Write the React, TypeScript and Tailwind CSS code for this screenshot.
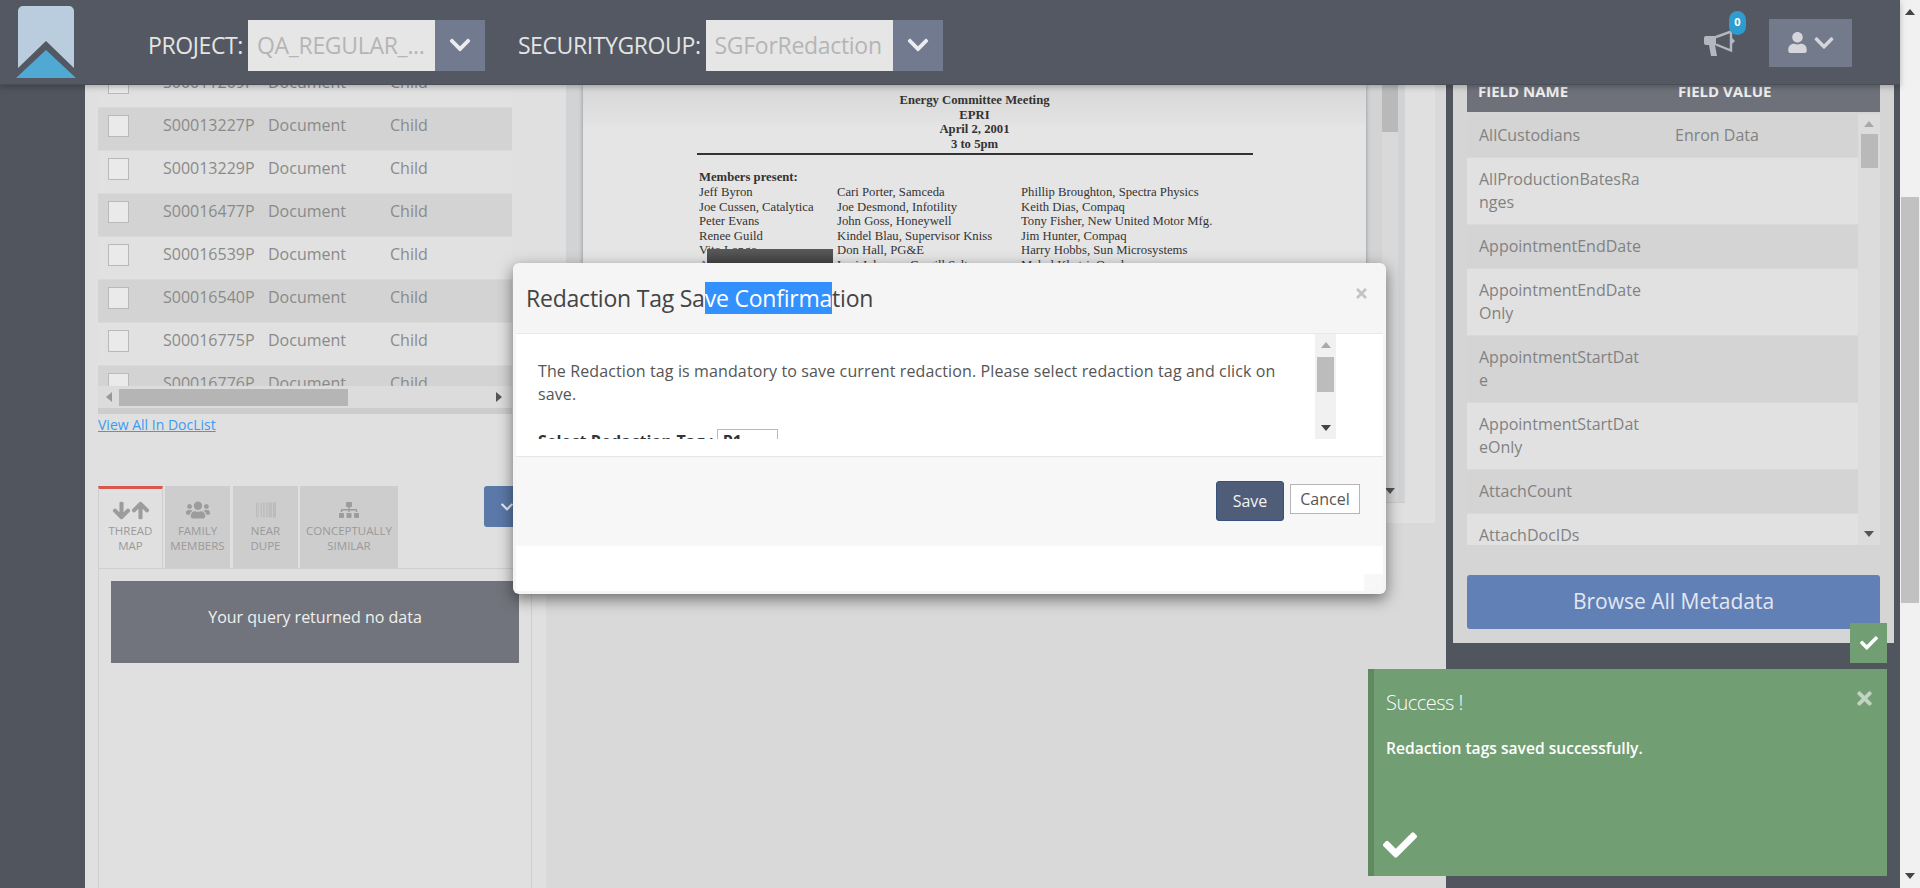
import React from 'react';
import { FaUser, FaChevronDown, FaCheck, FaTimes, FaUsers, FaBarcode, FaSitemap, FaArrowDown, FaArrowUp } from 'react-icons/fa';

const DOC_ROWS = ['S00011209P', 'S00013227P', 'S00013229P', 'S00016477P', 'S00016539P', 'S00016540P', 'S00016775P', 'S00016776P'];

const FIELDS = [
  { name: 'AllCustodians', value: 'Enron Data' },
  { name: 'AllProductionBatesRanges', value: '' },
  { name: 'AppointmentEndDate', value: '' },
  { name: 'AppointmentEndDateOnly', value: '' },
  { name: 'AppointmentStartDate', value: '' },
  { name: 'AppointmentStartDateOnly', value: '' },
  { name: 'AttachCount', value: '' },
  { name: 'AttachDocIDs', value: '' },
];

const MEMBERS = [
  ['Jeff Byron', 'Cari Porter, Samceda', 'Phillip Broughton, Spectra Physics'],
  ['Joe Cussen, Catalytica', 'Joe Desmond, Infotility', 'Keith Dias, Compaq'],
  ['Peter Evans', 'John Goss, Honeywell', 'Tony Fisher, New United Motor Mfg.'],
  ['Renee Guild', 'Kindel Blau, Supervisor Kniss', 'Jim Hunter, Compaq'],
  ['Vito Longo', 'Don Hall, PG&E', 'Harry Hobbs, Sun Microsystems'],
  ['Arthur', 'Lori Johnson, Cargill Salt', 'Mehul Khatri, Oracle'],
];

function Arrow({ dir, className }: { dir: 'up' | 'down' | 'left' | 'right'; className: string }) {
  const points = { up: '0,8 5,2 10,8', down: '0,2 5,8 10,2', left: '8,0 2,5 8,10', right: '2,0 8,5 2,10' }[dir];
  return (
    <svg viewBox="0 0 10 10" className={className} fill="currentColor">
      <polygon points={points} />
    </svg>
  );
}

function Logo() {
  return (
    <svg viewBox="0 0 60 72" className="w-[60px] h-[72px]">
      <path d="M2 5 a5 5 0 0 1 5 -5 h46 a5 5 0 0 1 5 5 v57 L30 35 L2 62 z" fill="#b9cddf" />
      <path d="M0 72 L30 44 L60 72 Z" fill="#4fa9d3" />
    </svg>
  );
}

function Bullhorn() {
  return (
    <svg viewBox="0 0 32 26" className="w-[32px] h-[26px]">
      <path d="M1 6 h12 v9 h-1 l2 11 h-6 l-2 -11 h-3 a2 2 0 0 1 -2 -2 v-5 a2 2 0 0 1 2 -2 z" fill="#b4b7c0" />
      <path d="M13 7 L28 1.5 V20.5 L13 14.5" fill="none" stroke="#b4b7c0" strokeWidth="2.4" />
      <path d="M29 8 L32 11 L29 14 Z" fill="#b4b7c0" />
    </svg>
  );
}

function Picker({ label, value }: { label: string; value: string }) {
  return (
    <div className="flex items-center">
      <span className="text-[23px] text-[#e4e4e4] tracking-[-0.4px] mr-[5px]">{label}</span>
      <span className="w-[187px] h-[51px] bg-[#e6e6e6] text-[#b5b5b5] text-[23px] tracking-[-0.3px] leading-[51px] pl-[9px] whitespace-nowrap overflow-hidden">{value}</span>
      <span className="w-[50px] h-[51px] bg-[#717a8e] flex items-center justify-center text-[#ececf0]">
        <FaChevronDown size={24} />
      </span>
    </div>
  );
}

function Tab({ icon, lines, active, width }: { icon: React.ReactNode; lines: string[]; active?: boolean; width: string }) {
  return (
    <div className={`${width} h-[82px] flex flex-col items-center text-[11.5px] leading-[15px] text-[#9a9a9a] ${active ? 'border-t-[3px] border-t-[#d9574f] border-x border-x-[#cfcfcf] bg-[#e0e0e0] pt-[9px]' : 'bg-[#cdcdcd] pt-[12px]'}`}>
      <div className="h-[24px] flex items-center text-[#9c9c9c]">{icon}</div>
      <div className="mt-[1px] text-center">
        {lines.map((l) => (
          <div key={l}>{l}</div>
        ))}
      </div>
    </div>
  );
}

function LeftColumn() {
  return (
    <div className="w-[447px] shrink-0 pl-[13px] bg-[#e0e0e0] flex flex-col text-[#8a8a8a]">
      <div className="w-[414px] h-[301px] overflow-hidden shrink-0">
        <div className="-mt-[20px]">
          {DOC_ROWS.map((id, i) => (
            <div key={id} className={`h-[43px] flex items-start border-b border-[#d9d9d9] text-[16px] leading-[22px] ${i % 2 === 0 ? 'bg-[#e1e1e1]' : 'bg-[#d3d3d3]'}`}>
              <span className="w-[21px] h-[22px] ml-[10px] mt-[7px] border border-[#b9b9b9] bg-[#eaeaea] shrink-0"></span>
              <span className="w-[105px] ml-[34px] pt-[6px] shrink-0">{id}</span>
              <span className="w-[122px] pt-[6px] shrink-0">Document</span>
              <span className="pt-[6px]">Child</span>
            </div>
          ))}
        </div>
      </div>
      <div className="w-[414px] h-[22px] bg-[#dcdcdc] flex items-center text-[#777] shrink-0">
        <Arrow dir="left" className="w-[10px] h-[10px] ml-[6px] text-[#999]" />
        <div className="w-[229px] h-[17px] bg-[#b5b5b5] ml-[5px]"></div>
        <Arrow dir="right" className="w-[10px] h-[10px] ml-auto mr-[8px] text-[#555]" />
      </div>
      <div className="w-[414px] h-[6px] bg-[#cdcdcd] shrink-0"></div>
      <a className="text-[14px] leading-[20px] text-[#3c9bf0] underline mt-[1px] self-start">View All In DocList</a>
      <div className="flex items-start mt-[51px] gap-[2px] border-b border-[#cfcfcf] h-[83px] shrink-0">
        <Tab
          active
          width="w-[65px]"
          lines={['THREAD', 'MAP']}
          icon={
            <span className="flex">
              <FaArrowDown size={19} stroke="currentColor" strokeWidth={30} />
              <FaArrowUp size={19} stroke="currentColor" strokeWidth={30} />
            </span>
          }
        />
        <Tab width="w-[65px]" lines={['FAMILY', 'MEMBERS']} icon={<FaUsers size={24} />} />
        <div className="ml-[1px]"><Tab width="w-[65px]" lines={['NEAR', 'DUPE']} icon={<FaBarcode size={20} className="text-[#b5b5b5]" />} /></div>
        <Tab width="w-[98px]" lines={['CONCEPTUALLY', 'SIMILAR']} icon={<FaSitemap size={20} />} />
        <div className="ml-auto w-[48px] h-[41px] rounded-l-[3px] bg-[#5b79a8] flex items-center text-[#e7ecf3] pl-[16px]">
          <FaChevronDown size={14} />
        </div>
      </div>
      <div className="flex-1 border-x border-[#cfcfcf] px-[12px] pt-[12px]">
        <div className="h-[82px] w-[408px] bg-[#71747c] text-[#f0f0f0] text-[16px] flex items-center justify-center pb-[10px]">
          Your query returned no data
        </div>
      </div>
    </div>
  );
}

function DocViewer() {
  return (
    <div className="flex-1 bg-[#d9d9d9] flex flex-col border-l-[14px] border-[#e0e0e0]">
      <div className="w-[889px] h-[438px] bg-[#e0e0e0] pl-[20px] shrink-0">
        <div className="w-[839px] h-[418px] bg-[#d2d3d5] border-b border-[#cccccc] pl-[17px] flex overflow-hidden">
          <div className="w-[783px] h-full bg-[#e5e5e5] shadow-[0_0_4px_rgba(0,0,0,0.35)] overflow-hidden font-['Liberation_Serif',serif] text-[#333] relative">
            <div className="h-[40px] bg-gradient-to-b from-[#d6d6d6] to-[#e3e3e3] absolute inset-x-0 top-0"></div>
            <div className="relative pt-[8px] text-[12.7px] font-bold leading-[14.6px] text-center">
              <div>Energy Committee Meeting</div>
              <div>EPRI</div>
              <div>April 2, 2001</div>
              <div>3 to 5pm</div>
            </div>
            <div className="relative h-[2px] w-[556px] ml-[114px] mt-[2px] bg-[#333]"></div>
            <div className="relative ml-[116px] mt-[15px] text-[12.7px] leading-[14.6px]">
              <div className="font-bold">Members present:</div>
              {MEMBERS.map((row) => (
                <div key={row[0]} className="flex whitespace-nowrap">
                  <span className="w-[138px]">{row[0]}</span>
                  <span className="w-[184px]">{row[1]}</span>
                  <span>{row[2]}</span>
                </div>
              ))}
              <div className="absolute left-[8px] top-[79px] w-[126px] h-[30px] bg-gradient-to-b from-[#5a5a5a] to-[#2b2b2b]"></div>
            </div>
          </div>
          <div className="w-[16px] ml-[16px] h-full bg-[#d9d9d9] flex flex-col items-center">
            <div className="w-full h-[47px] bg-[#b9b9b9]"></div>
            <Arrow dir="down" className="w-[10px] h-[10px] mt-auto mb-[6px] text-[#555]" />
          </div>
        </div>
      </div>
    </div>
  );
}

function MetadataColumn() {
  return (
    <div className="w-[454px] shrink-0 bg-[#50555e] pl-[7px] pr-[6px]">
      <div className="h-[558px] bg-[#d5d5d5] px-[14px] flex flex-col">
        <div className="h-[27px] bg-[#6e717a] flex items-start text-[15px] leading-[12px] font-bold text-[#eeeeee] shrink-0">
          <span className="w-[211px] pl-[11px]">FIELD NAME</span>
          <span>FIELD VALUE</span>
        </div>
        <div className="h-[431px] mt-[2px] flex overflow-hidden shrink-0">
          <div className="w-[391px] text-[16px] leading-[23px] text-[#828282]">
            {FIELDS.map((f, i) => (
              <div key={f.name} className={`flex border-b border-[#d9d9d9] py-[10px] ${i % 2 === 0 ? 'bg-[#d4d4d4]' : 'bg-[#e1e1e1]'}`}>
                <span className="w-[168px] ml-[12px] break-all">{f.name}</span>
                <span className="ml-[28px]">{f.value}</span>
              </div>
            ))}
          </div>
          <div className="w-[22px] bg-[#dcdcdc] flex flex-col items-center">
            <Arrow dir="up" className="w-[10px] h-[10px] mt-[5px] text-[#a9a9a9]" />
            <div className="w-[17px] h-[34px] bg-[#b9b9b9] mt-[5px]"></div>
            <Arrow dir="down" className="w-[10px] h-[10px] mt-auto mb-[6px] text-[#555]" />
          </div>
        </div>
        <div className="mt-[30px] h-[54px] rounded-[3px] bg-[#6180b6] text-[#e3e7f1] text-[21px] flex items-center justify-center shrink-0">
          Browse All Metadata
        </div>
      </div>
    </div>
  );
}

function RedactionModal() {
  return (
    <div className="absolute left-[513px] top-[263px] w-[873px] h-[331px] rounded-[6px] bg-[#f5f5f5] p-[3px] shadow-[0_5px_15px_rgba(0,0,0,0.5)] flex flex-col">
      <div className="h-[68px] border-b border-[#e9e9e9] pl-[10px] flex items-start justify-between shrink-0">
        <h4 className="text-[23px] leading-[32px] mt-[16px] text-[#444] tracking-[-0.22px]">
          Redaction Tag Sa<span className="bg-[#3390ff] text-white">ve Confirma</span>tion
        </h4>
        <FaTimes size={15} className="text-[#c4c4c4] mt-[20px] mr-[14px]" />
      </div>
      <div className="h-[122px] bg-white flex shrink-0">
        <div className="w-[799px] h-[105px] overflow-hidden px-[22px] pt-[26px] text-[16px] leading-[23px] text-[#555] tracking-[0.12px]">
          <p>The Redaction tag is mandatory to save current redaction. Please select redaction tag and click on save.</p>
          <div className="mt-[23px] flex items-start">
            <b className="text-[#333] pt-[1px]">Select Redaction Tag :</b>
            <span className="ml-[3px] w-[61px] h-[24px] border border-[#bbb] pl-[5px] font-bold text-[#333] leading-[22px] flex justify-between pr-[4px]">P1<Arrow dir="down" className="w-[10px] h-[10px] mt-[8px] text-[#555]" /></span>
          </div>
        </div>
        <div className="w-[21px] h-[105px] bg-[#f1f1f1] flex flex-col items-center">
          <Arrow dir="up" className="w-[10px] h-[10px] mt-[6px] text-[#aaa]" />
          <div className="w-[17px] h-[35px] bg-[#bcbcbc] mt-[7px]"></div>
          <Arrow dir="down" className="w-[10px] h-[10px] mt-auto mb-[6px] text-[#444]" />
        </div>
      </div>
      <div className="h-[90px] bg-[#f7f7f7] border-t border-[#e6e6e6] flex justify-end items-start pt-[24px] pr-[23px] shrink-0">
        <button className="w-[68px] h-[40px] bg-[#4f5d78] border border-[#35527f] rounded-[3px] text-[#f2f2f2] text-[16px]">Save</button>
        <button className="w-[70px] h-[30px] ml-[6px] mt-[3px] bg-white border border-[#b5b5b5] text-[#555] text-[16px]">Cancel</button>
      </div>
      <div className="flex-1 bg-white flex justify-end items-end">
        <div className="w-[19px] h-[17px] bg-[#f7f7f7]"></div>
      </div>
    </div>
  );
}

function SuccessToast() {
  return (
    <>
      <div className="absolute left-[1850px] top-[623px] w-[37px] h-[40px] bg-[#729e74] flex items-center justify-center text-white">
        <FaCheck size={18} />
      </div>
      <div className="absolute left-[1368px] top-[669px] w-[519px] h-[207px] bg-[#729e74] border-l-[6px] border-[#5f8a60] text-white">
        <div className="text-[20px] font-light leading-[28px] mt-[20px] ml-[12px] tracking-[-0.5px]">Success !</div>
        <div className="text-[15.6px] font-semibold leading-[20px] mt-[21px] ml-[12px]">Redaction tags saved successfully.</div>
        <FaTimes size={21} className="absolute right-[12px] top-[19px] text-[#c0d4c0]" />
        <FaCheck size={34} className="absolute left-[9px] bottom-[14px]" />
      </div>
    </>
  );
}

export default function App() {
  return (
    <div className="relative w-[1920px] h-[888px] overflow-hidden flex font-['Open_Sans',sans-serif]">
      <div className="w-[1900px] flex flex-col">
        <header className="relative z-10 h-[85px] shrink-0 bg-[#535862] border-b border-[#4a4e57] shadow-[0_2px_6px_rgba(0,0,0,0.25)] flex items-center">
          <div className="ml-[16px] self-start pt-[6px]"><Logo /></div>
          <div className="ml-[72px] flex items-center mt-[6px]">
            <Picker label="PROJECT:" value="QA_REGULAR_..." />
            <div className="ml-[33px]"><Picker label="SECURITYGROUP:" value="SGForRedaction" /></div>
          </div>
          <div className="ml-auto relative mr-[34px] mt-[1px]">
            <Bullhorn />
            <span className="absolute left-[26px] top-[-19px] w-[17px] h-[24px] rounded-full bg-[#2e9ccf] text-white text-[11px] font-bold flex items-center justify-center">0</span>
          </div>
          <div className="w-[83px] h-[48px] mr-[48px] mt-[1px] bg-[#737a8c] text-[#d5d6dc] flex items-center justify-center gap-[5px]">
            <FaUser size={21} />
            <FaChevronDown size={22} />
          </div>
        </header>
        <div className="flex-1 flex overflow-hidden">
          <div className="w-[85px] shrink-0 bg-[#50555e]"></div>
          <LeftColumn />
          <DocViewer />
          <MetadataColumn />
        </div>
      </div>
      <div className="w-[20px] bg-[#f1f1f1] flex flex-col items-center">
        <Arrow dir="up" className="w-[10px] h-[10px] mt-[7px] text-[#444]" />
        <div className="w-[18px] h-[406px] bg-[#c1c1c1] mt-[180px]"></div>
        <Arrow dir="down" className="w-[10px] h-[10px] mt-auto mb-[7px] text-[#444]" />
      </div>
      <RedactionModal />
      <SuccessToast />
    </div>
  );
}
